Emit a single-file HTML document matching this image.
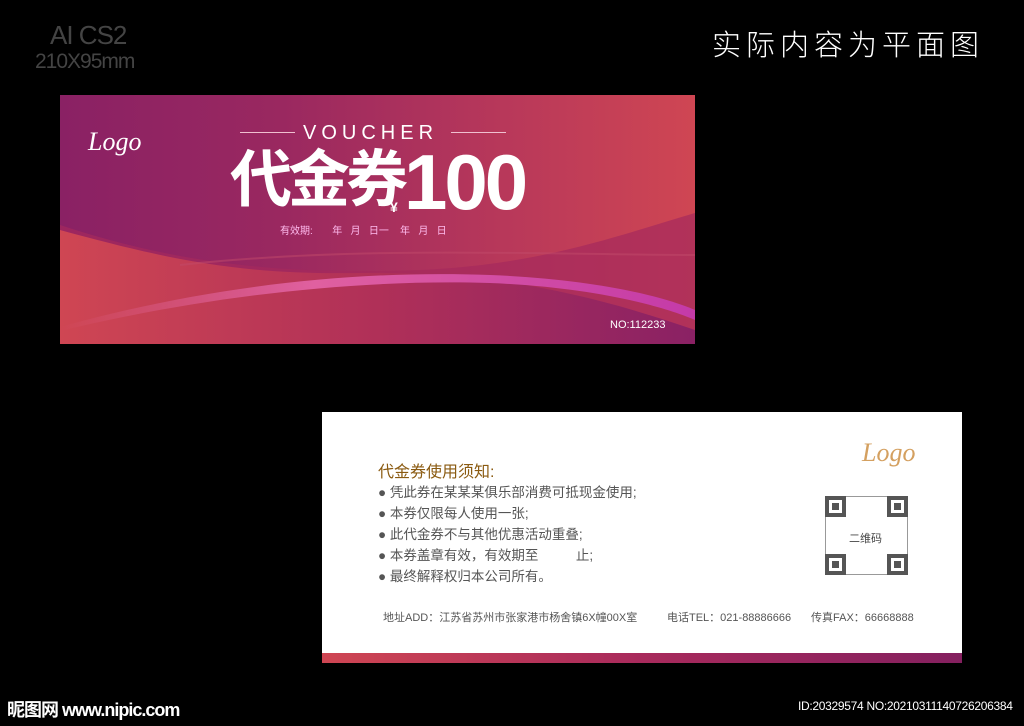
<!DOCTYPE html>
<html><head><meta charset="utf-8"><style>
*{margin:0;padding:0;box-sizing:border-box}
body{width:1024px;height:726px;background:#000;position:relative;overflow:hidden;font-family:"Liberation Sans","Noto Sans CJK SC",sans-serif}
.abs{position:absolute;white-space:nowrap}
.qr{position:absolute;width:21px;height:21px;background:#555;border:4px solid #555;box-shadow:inset 0 0 0 3px #fff}
</style></head><body>
<div class="abs" style="left:50px;top:20px;font-size:26px;color:#444;letter-spacing:-1px;font-weight:300">AI CS2</div>
<div class="abs" style="left:35px;top:50px;font-size:21px;color:#444;letter-spacing:-1px;font-weight:300">210X95mm</div>
<div class="abs" style="left:712px;top:22px;font-size:29px;color:#fff;letter-spacing:5px;font-weight:300">实际内容为平面图</div>

<div class="abs" style="left:60px;top:95px;width:635px;height:249px;overflow:hidden;background:linear-gradient(90deg,#8a2164 0%,#9a2860 35%,#b8385a 70%,#cf4653 100%)">
<svg width="635" height="249" style="position:absolute;left:0;top:0">
<defs>
<linearGradient id="g1" x1="0" x2="1"><stop offset="0" stop-color="#cf4653"/><stop offset="0.5" stop-color="#b03058"/><stop offset="1" stop-color="#8a2164"/></linearGradient>
<linearGradient id="g2" x1="0" x2="1"><stop offset="0" stop-color="#e36a9a" stop-opacity="0"/><stop offset="0.4" stop-color="#e060a0"/><stop offset="1" stop-color="#c43aa8"/></linearGradient>
</defs>
<path d="M0 130 C120 170 230 180 360 175 C480 170 560 140 635 118 L635 249 L0 249Z" fill="#a52a5c" opacity="0.7"/>
<path d="M0 135 C110 165 180 180 300 178 C420 176 520 195 635 235 L635 249 L0 249Z" fill="url(#g1)"/>
<path d="M0 232 C150 190 300 175 430 180 C530 184 600 200 635 215 L635 225 C600 210 530 192 430 188 C300 184 150 200 0 236Z" fill="url(#g2)"/>
<path d="M120 170 C300 150 500 160 635 160" stroke="#c24a6a" stroke-width="2" fill="none" opacity="0.5"/>
</svg>
<div class="abs" style="left:28px;top:32px;font-family:'Liberation Serif',serif;font-style:italic;font-size:26px;color:#fff">Logo</div>
<div class="abs" style="left:180px;top:37px;width:55px;height:1px;background:#f0c0d0"></div>
<div class="abs" style="left:391px;top:37px;width:55px;height:1px;background:#f0c0d0"></div>
<div class="abs" style="left:243px;top:27px;font-size:20px;color:#fff;letter-spacing:5px">VOUCHER</div>
<div class="abs" style="left:170px;top:48px;font-size:62px;color:#fff;font-weight:bold;letter-spacing:-4px;line-height:76px">代金券</div>
<div class="abs" style="left:330px;top:104px;font-size:14px;color:#fff;font-weight:bold">¥</div>
<div class="abs" style="left:344px;top:46px;font-size:78px;color:#fff;font-weight:bold;letter-spacing:-3px;line-height:82px">100</div>
<div class="abs" style="left:220px;top:127px;font-size:10px;color:#fbe">有效期:&nbsp;&nbsp;&nbsp;&nbsp;&nbsp;&nbsp;&nbsp;年&nbsp;&nbsp;&nbsp;月&nbsp;&nbsp;&nbsp;日一&nbsp;&nbsp;&nbsp;&nbsp;年&nbsp;&nbsp;&nbsp;月&nbsp;&nbsp;&nbsp;日</div>
<div class="abs" style="left:550px;top:224px;font-size:11px;color:#fff">NO:112233</div>
</div>

<div class="abs" style="left:322px;top:412px;width:640px;height:251px;background:#fff">
<div class="abs" style="left:0;top:241px;width:640px;height:10px;background:linear-gradient(90deg,#cf4653,#a82a5c 50%,#84205f)"></div>
<div class="abs" style="left:56px;top:46px;font-size:16px;color:#8a5a10">代金券使用须知:</div>
<div class="abs" style="left:56px;top:70px;font-size:13.5px;color:#555;line-height:21px">● 凭此券在某某某俱乐部消费可抵现金使用;<br>● 本券仅限每人使用一张;<br>● 此代金券不与其他优惠活动重叠;<br>● 本券盖章有效，有效期至&nbsp;&nbsp;&nbsp;&nbsp;&nbsp;&nbsp;&nbsp;&nbsp;&nbsp;&nbsp;止;<br>● 最终解释权归本公司所有。</div>
<div class="abs" style="left:540px;top:26px;font-family:'Liberation Serif',serif;font-style:italic;font-size:26px;color:#d4a060">Logo</div>
<div class="abs" style="left:503px;top:84px;width:83px;height:79px;border:1px solid #999"></div>
<div class="qr" style="left:503px;top:84px"></div>
<div class="qr" style="left:565px;top:84px"></div>
<div class="qr" style="left:503px;top:142px"></div>
<div class="qr" style="left:565px;top:142px"></div>
<div class="abs" style="left:527px;top:118px;font-size:11px;color:#444">二维码</div>
<div class="abs" style="left:61px;top:197px;font-size:11px;color:#555">地址ADD：江苏省苏州市张家港市杨舍镇6X幢00X室</div>
<div class="abs" style="left:345px;top:197px;font-size:11px;color:#555">电话TEL：021-88886666</div>
<div class="abs" style="left:489px;top:197px;font-size:11px;color:#555">传真FAX：66668888</div>
</div>

<div class="abs" style="left:7px;top:696px;font-size:18px;color:#fff;font-weight:bold;letter-spacing:-1px">昵图网 www.nipic.com</div>
<div class="abs" style="left:798px;top:699px;font-size:12px;color:#fff;letter-spacing:-0.3px">ID:20329574 NO:20210311140726206384</div>
</body></html>
